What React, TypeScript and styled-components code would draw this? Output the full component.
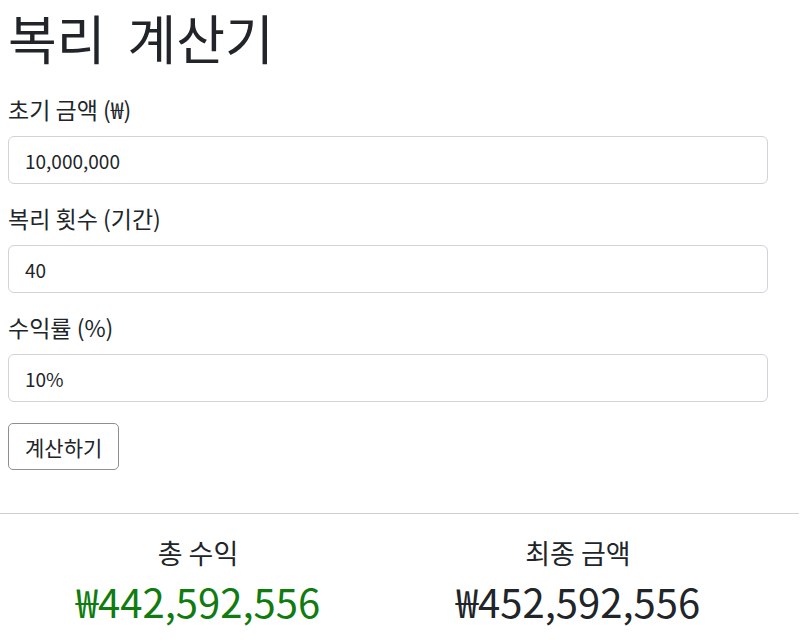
import React from 'react';
import styled, { createGlobalStyle } from 'styled-components';

const GlobalStyle = createGlobalStyle`
  body {
    margin: 0;
    background: #fff;
    color: #212529;
    font-family: "Noto Sans CJK KR", "Noto Sans", sans-serif;
  }
`;

const fields = [
  { label: '초기 금액 (₩)', value: '10,000,000' },
  { label: '복리 횟수 (기간)', value: '40' },
  { label: '수익률 (%)', value: '10%' },
];

export default function App() {
  return (
    <PageStyled>
      <GlobalStyle />
      <FormStyled>
        <TitleStyled>복리 계산기</TitleStyled>
        {fields.map((f) => (
          <GroupStyled key={f.label}>
            <LabelStyled>{f.label}</LabelStyled>
            <InputStyled defaultValue={f.value} />
          </GroupStyled>
        ))}
        <ButtonStyled>계산하기</ButtonStyled>
      </FormStyled>
      <DividerStyled />
      <ResultsStyled>
        <ResultStyled>
          <ResultLabelStyled>총 수익</ResultLabelStyled>
          <AmountStyled $green>₩442,592,556</AmountStyled>
        </ResultStyled>
        <ResultStyled>
          <ResultLabelStyled>최종 금액</ResultLabelStyled>
          <AmountStyled>₩452,592,556</AmountStyled>
        </ResultStyled>
      </ResultsStyled>
    </PageStyled>
  );
}

const PageStyled = styled.div`
  width: 799px;
`;

const FormStyled = styled.div`
  width: 760px;
  padding: 0 0 0 8px;
  display: flex;
  flex-direction: column;
`;

const TitleStyled = styled.h1`
  margin: 4px 0 26px;
  font-size: 53px;
  font-weight: 400;
  line-height: 66px;
  word-spacing: 10px;
`;

const GroupStyled = styled.div`
  display: flex;
  flex-direction: column;
  margin-bottom: 21px;
`;

const LabelStyled = styled.label`
  font-size: 23px;
  line-height: 26px;
  margin-bottom: 14px;
`;

const InputStyled = styled.input`
  box-sizing: border-box;
  height: 48px;
  padding: 0 16px;
  font-family: inherit;
  font-size: 19px;
  color: #212529;
  border: 1px solid #ced4da;
  border-radius: 6px;
  outline: none;
`;

const ButtonStyled = styled.button`
  align-self: flex-start;
  box-sizing: border-box;
  height: 47px;
  padding: 0 16px;
  font-family: inherit;
  font-size: 21px;
  color: #212529;
  background: #fff;
  border: 1px solid #8f8f8f;
  border-radius: 5px;
  margin-top: 0;
`;

const DividerStyled = styled.hr`
  margin: 43px 0 0;
  border: none;
  border-top: 1px solid #cfcfcf;
`;

const ResultsStyled = styled.div`
  width: 760px;
  margin-left: 8px;
  display: grid;
  grid-template-columns: 1fr 1fr;
  padding-top: 21px;
`;

const ResultStyled = styled.div`
  display: flex;
  flex-direction: column;
  align-items: center;
`;

const ResultLabelStyled = styled.div`
  font-size: 27px;
  line-height: 36px;
`;

const AmountStyled = styled.div<{ $green?: boolean }>`
  font-size: 40px;
  line-height: 56px;
  margin-top: 2px;
  color: ${(p) => (p.$green ? '#107c10' : '#212529')};
`;
